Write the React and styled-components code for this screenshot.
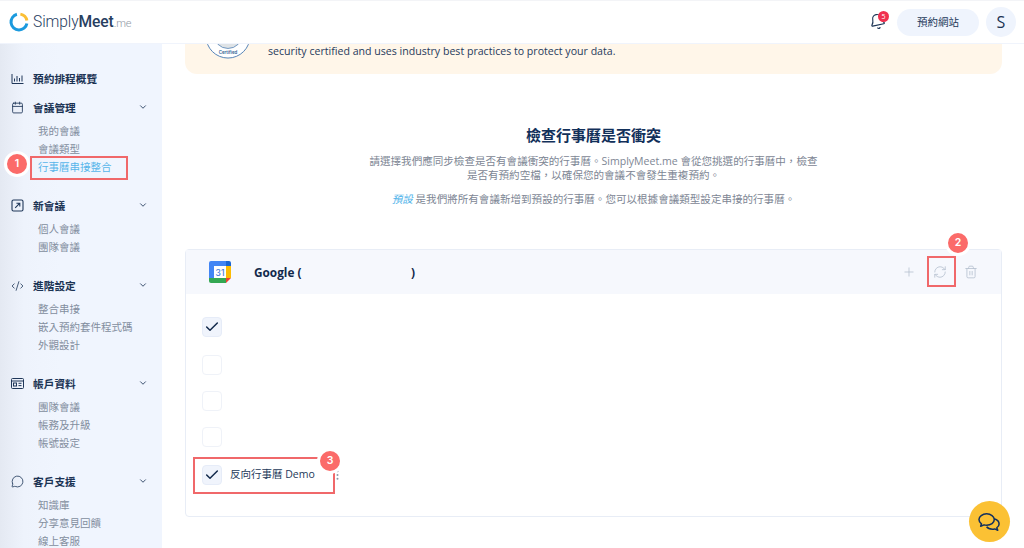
import React from "react";
import styled, { createGlobalStyle } from "styled-components";
import { Bell, Calendar, Check, ChevronDown, CodeXml, MessageCircle, Plus, RefreshCw, Trash2 } from "lucide-react";

const GlobalStyle = createGlobalStyle`
  html, body { margin: 0; padding: 0; height: 100%; background: #fff; }
  body { font-family: "Open Sans", "Noto Sans CJK TC", sans-serif; color: #1b3354; }
  * { box-sizing: border-box; }
`;

const Page = styled.div`
  width: 1024px;
  height: 548px;
  overflow: hidden;
  position: relative;
  display: flex;
  flex-direction: column;
`;

const Header = styled.header`
  height: 44px;
  flex-shrink: 0;
  display: flex;
  align-items: center;
  justify-content: space-between;
  padding: 0 8px 0 9px;
  border-top: 1px solid #f3f4f7;
  border-bottom: 1px solid #f0f4fc;
  background: #fff;
  position: relative;
  z-index: 2;
`;

const Logo = styled.div`
  display: flex;
  align-items: center;
  gap: 4px;
  font-family: "Roboto", sans-serif;
  font-size: 15.6px;
  letter-spacing: -0.1px;
  color: #28405f;
`;

const LogoBold = styled.span`
  font-weight: 500;
`;

const LogoLight = styled.span`
  font-weight: 300;
`;

const LogoTld = styled.span`
  font-size: 11px;
  font-weight: 300;
  color: #8f98a4;
`;

const HeaderRight = styled.div`
  display: flex;
  align-items: center;
`;

const BellWrap = styled.div`
  position: relative;
  width: 18px;
  height: 18px;
  margin-right: 10px;
  color: #1b3354;
  svg {
    transform: rotate(-12deg);
  }
`;

const BellCount = styled.span`
  position: absolute;
  top: -2px;
  right: -2px;
  width: 11px;
  height: 11px;
  border-radius: 50%;
  background: #f0304f;
  color: #fff;
  font-size: 7px;
  line-height: 11px;
  text-align: center;
`;

const SiteButton = styled.div`
  width: 82px;
  height: 27px;
  border-radius: 14px;
  background: #eff4fd;
  font-size: 10.5px;
  line-height: 27px;
  text-align: center;
  color: #24395a;
  margin-right: 7px;
`;

const Avatar = styled.div`
  width: 30px;
  height: 30px;
  border-radius: 50%;
  background: #eff4fd;
  font-size: 16px;
  line-height: 30px;
  text-align: center;
  color: #1b3354;
`;

const Body = styled.div`
  flex: 1;
  min-height: 0;
  display: flex;
`;

const Sidebar = styled.nav`
  width: 162px;
  flex-shrink: 0;
  padding-top: 25px;
  overflow: hidden;
  background: linear-gradient(90deg, #e4e9f2 0, #eef3fc 24px, #f0f5fe 60px);
`;

const Group = styled.div`
  margin-bottom: ${(p) => p.$gap}px;
`;

const GroupTitle = styled.div`
  height: 18px;
  display: flex;
  align-items: center;
  padding: 0 14px 0 11px;
  font-size: 10.7px;
  font-weight: 700;
  color: #1b3354;
`;

const GroupIcon = styled.span`
  width: 13px;
  height: 13px;
  margin-right: 9px;
  display: flex;
  color: #1f3759;
`;

const GroupLabel = styled.span`
  flex: 1;
`;

const SubList = styled.div`
  margin-top: 6px;
`;

const SubItem = styled.div`
  height: 18px;
  padding-left: 38px;
  font-size: 10.5px;
  line-height: 18px;
  white-space: nowrap;
  color: ${(p) => (p.$active ? "#57b5ea" : "#838e9e")};
  position: relative;
`;

const MarkBox = styled.span`
  position: absolute;
  border: 2px solid #f0686a;
  pointer-events: none;
`;

const SidebarMark = styled(MarkBox)`
  left: 30px;
  top: -2px;
  width: 98px;
  height: 24px;
`;

const StepBadge = styled.span`
  position: absolute;
  width: 26px;
  height: 26px;
  border-radius: 50%;
  border: 3px solid #fff;
  background: #fb6b69;
  color: #fff;
  font-family: "Inter", sans-serif;
  font-size: 10.5px;
  font-weight: 600;
  line-height: 20px;
  text-align: center;
  z-index: 1;
`;

const SidebarBadge = styled(StepBadge)`
  left: 4px;
  top: -7px;
`;

const Main = styled.main`
  flex: 1;
  min-width: 0;
  padding: 0 22px 0 23px;
  background: #fff;
`;

const Banner = styled.div`
  height: 30px;
  overflow: hidden;
  display: flex;
  align-items: flex-end;
  gap: 17px;
  padding: 0 0 15px 20px;
  background: #fff6e9;
  border-radius: 0 0 12px 12px;
  font-size: 10.6px;
  line-height: 16px;
  color: #1f3a5c;
`;

const Seal = styled.svg`
  flex-shrink: 0;
  margin-top: -40px;
`;

const Intro = styled.section`
  margin-top: 51px;
  text-align: center;
`;

const Title = styled.h2`
  margin: 0;
  font-size: 15px;
  font-weight: 700;
  line-height: 20px;
  color: #12305a;
`;

const Desc = styled.p`
  margin: ${(p) => p.$top}px 0 0;
  font-size: 10.55px;
  line-height: 13.5px;
  color: #7d8694;
`;

const DefaultTag = styled.em`
  color: #4fb3ea;
  font-style: italic;
`;

const Card = styled.section`
  margin-top: 42px;
  height: 268px;
  border: 1px solid #e8edf6;
  border-radius: 4px;
`;

const CardHeader = styled.div`
  height: 44px;
  display: flex;
  align-items: center;
  padding: 0 23px;
  background: #f6f8fd;
  position: relative;
`;

const AccountName = styled.div`
  width: 161px;
  margin-left: 23px;
  display: flex;
  justify-content: space-between;
  font-size: 11.8px;
  font-weight: 700;
  color: #12294b;
`;

const Actions = styled.div`
  margin-left: auto;
  display: flex;
  align-items: center;
  gap: 17px;
  color: #b6c0cf;
`;

const SyncMark = styled(MarkBox)`
  left: 741px;
  top: 6px;
  width: 29px;
  height: 31px;
`;

const SyncBadge = styled(StepBadge)`
  left: 759px;
  top: -20px;
`;

const CalendarList = styled.div`
  padding: 23px 16px 0;
`;

const CalendarRow = styled.div`
  height: 20px;
  margin-bottom: ${(p) => p.$gap}px;
  display: flex;
  align-items: center;
  gap: 8px;
  position: relative;
  font-size: 10.5px;
  color: #24395a;
`;

const RowLabel = styled.span`
  margin-top: -2px;
`;

const CheckBox = styled.span`
  width: 20px;
  height: 20px;
  flex-shrink: 0;
  display: flex;
  align-items: center;
  justify-content: center;
  border-radius: 4px;
  border: 1px solid ${(p) => (p.$checked ? "#e6ecf8" : "#eff2f8")};
  background: ${(p) => (p.$checked ? "#f0f4fc" : "#fff")};
  color: #12294b;
`;

const RowMark = styled(MarkBox)`
  left: -9px;
  top: -8px;
  width: 142px;
  height: 37px;
`;

const RowBadge = styled(StepBadge)`
  left: 115px;
  top: -17px;
`;

const RowMenu = styled.svg`
  position: absolute;
  left: 134px;
  top: 5px;
`;

const ChatButton = styled.div`
  position: absolute;
  right: 14px;
  bottom: 6px;
  width: 41px;
  height: 41px;
  border-radius: 50%;
  background: #fbc134;
  color: #12305e;
  display: flex;
  align-items: center;
  justify-content: center;
  z-index: 3;
`;

const LogoMark = () => (
  <svg width="20" height="20" viewBox="0 0 20 20" fill="none" strokeWidth="3">
    <path d="M17.88 11.39A8 8 0 1 1 7.93 2.27" stroke="#1b9ade" />
    <path d="M11.39 2.12A8 8 0 0 1 17.88 8.61" stroke="#fbbf35" />
  </svg>
);

const ChartIcon = () => (
  <svg width="13" height="13" viewBox="0 0 13 13" fill="none" stroke="currentColor" strokeWidth="1">
    <path d="M1 2v9.5h11.5M3.5 9.5V6.5M6 9.5V4M8.5 9.5V6M11 9.5V3.5" />
  </svg>
);

const LinkBoxIcon = () => (
  <svg width="13" height="13" viewBox="0 0 13 13" fill="none" stroke="currentColor" strokeWidth="1.1">
    <rect x="1" y="1" width="11" height="11" rx="1.5" />
    <path d="M4.2 8.8L8.8 4.2M5.4 4.2h3.4v3.4" />
  </svg>
);

const IdCardIcon = () => (
  <svg width="13" height="13" viewBox="0 0 13 13" fill="none" stroke="currentColor" strokeWidth="1">
    <rect x="0.5" y="1.5" width="12" height="10" rx="1" />
    <path d="M0.5 4h12M7.5 6.3h3M7.5 8.6h3" />
    <rect x="2.5" y="6" width="3" height="3" />
  </svg>
);

const ChatBubbles = () => (
  <svg width="23" height="20" viewBox="0 0 24 20" fill="none" stroke="currentColor" strokeWidth="1.6" strokeLinejoin="round">
    <path d="M9 1.5C4.6 1.5 1 4.2 1 7.5c0 1.8 1 3.3 2.6 4.4l-.8 2.6 3.5-1.5c.9.3 1.7.4 2.7.4 4.4 0 8-2.6 8-5.9S13.4 1.5 9 1.5z" />
    <path d="M16.8 6.6c3 .9 5.2 2.9 5.2 5.4 0 1.6-1 3-2.4 4l1 2.6-3.2-1.4c-.8.2-1.6.3-2.4.3-2.6 0-4.8-.9-6-2.5" />
  </svg>
);

const GoogleCalendar = () => (
  <svg width="22" height="22" viewBox="0 0 22 22">
    <path d="M2 0h15v5H5v12H0V2a2 2 0 0 1 2-2z" fill="#4285f4" />
    <path d="M17 0h3a2 2 0 0 1 2 2v3h-5z" fill="#1a66d2" />
    <rect x="17" y="5" width="5" height="12" fill="#fbbc04" />
    <path d="M0 17h17v5H2a2 2 0 0 1-2-2z" fill="#34a853" />
    <path d="M17 17h5l-5 5z" fill="#ea4335" />
    <rect x="5" y="5" width="12" height="12" fill="#fff" />
    <text x="11" y="14.6" textAnchor="middle" fontFamily="Inter, sans-serif" fontSize="8.5" fontWeight="500" fill="#3f78d8">31</text>
  </svg>
);

const IsoSeal = () => (
  <Seal width="46" height="46" viewBox="0 0 48 48">
    <circle cx="24" cy="24" r="23" fill="#fff" stroke="#4f7fb5" strokeWidth="1" />
    <circle cx="24" cy="22" r="15" fill="#dfe3e6" stroke="#4f7fb5" strokeWidth="0.8" />
    <text x="24" y="26" textAnchor="middle" fontFamily="Inter, sans-serif" fontSize="7" fontWeight="700" fill="#2c5c92">27001</text>
    <text x="24" y="43" textAnchor="middle" fontFamily="Inter, sans-serif" fontSize="4.6" fontWeight="600" fill="#2c5c92">Certified</text>
  </Seal>
);

const NAV = [
  { icon: <ChartIcon />, label: "預約排程概覽", gap: 11 },
  { icon: <Calendar size={13} strokeWidth={1.6} />, label: "會議管理", chevron: true, items: ["我的會議", "會議類型", "行事曆串接整合"], gap: 20 },
  { icon: <LinkBoxIcon />, label: "新會議", chevron: true, items: ["個人會議", "團隊會議"], gap: 20 },
  { icon: <CodeXml size={14} strokeWidth={1.5} />, label: "進階設定", chevron: true, items: ["整合串接", "嵌入預約套件程式碼", "外觀設計"], gap: 20 },
  { icon: <IdCardIcon />, label: "帳戶資料", chevron: true, items: ["團隊會議", "帳務及升級", "帳號設定"], gap: 20 },
  { icon: <MessageCircle size={13} strokeWidth={1.5} />, label: "客戶支援", chevron: true, items: ["知識庫", "分享意見回饋", "線上客服"], gap: 0 },
];

const ROWS = [
  { checked: true, gap: 18 },
  { checked: false, gap: 16 },
  { checked: false, gap: 16 },
  { checked: false, gap: 18 },
];

const App = () => {
  return (
    <Page>
      <GlobalStyle />
      <Header>
        <Logo>
          <LogoMark />
          <span>
            <LogoLight>Simply</LogoLight>
            <LogoBold>Meet</LogoBold>
            <LogoTld>.me</LogoTld>
          </span>
        </Logo>
        <HeaderRight>
          <BellWrap>
            <Bell size={17} strokeWidth={1.6} />
            <BellCount>5</BellCount>
          </BellWrap>
          <SiteButton>預約網站</SiteButton>
          <Avatar>S</Avatar>
        </HeaderRight>
      </Header>
      <Body>
        <Sidebar>
          {NAV.map((group) => (
            <Group key={group.label} $gap={group.gap}>
              <GroupTitle>
                <GroupIcon>{group.icon}</GroupIcon>
                <GroupLabel>{group.label}</GroupLabel>
                {group.chevron && <ChevronDown size={10} strokeWidth={2} />}
              </GroupTitle>
              {group.items && (
                <SubList>
                  {group.items.map((item) => {
                    const active = item === "行事曆串接整合";
                    return (
                      <SubItem key={item} $active={active}>
                        {item}
                        {active && <SidebarMark />}
                        {active && <SidebarBadge>1</SidebarBadge>}
                      </SubItem>
                    );
                  })}
                </SubList>
              )}
            </Group>
          ))}
        </Sidebar>
        <Main>
          <Banner>
            <IsoSeal />
            <span>security certified and uses industry best practices to protect your data.</span>
          </Banner>
          <Intro>
            <Title>檢查行事曆是否衝突</Title>
            <Desc $top={10}>
              請選擇我們應同步檢查是否有會議衝突的行事曆。SimplyMeet.me 會從您挑選的行事曆中，檢查
              <br />
              是否有預約空檔，以確保您的會議不會發生重複預約。
            </Desc>
            <Desc $top={11}>
              <DefaultTag>預設</DefaultTag> 是我們將所有會議新增到預設的行事曆。您可以根據會議類型設定串接的行事曆。
            </Desc>
          </Intro>
          <Card>
            <CardHeader>
              <GoogleCalendar />
              <AccountName>
                <span>Google (</span>
                <span>)</span>
              </AccountName>
              <Actions>
                <Plus size={14} strokeWidth={1.4} />
                <RefreshCw size={14} strokeWidth={1.4} />
                <Trash2 size={14} strokeWidth={1.4} />
              </Actions>
              <SyncMark />
              <SyncBadge>2</SyncBadge>
            </CardHeader>
            <CalendarList>
              {ROWS.map((row, i) => (
                <CalendarRow key={i} $gap={row.gap}>
                  <CheckBox $checked={row.checked}>
                    {row.checked && <Check size={16} strokeWidth={2.2} />}
                  </CheckBox>
                </CalendarRow>
              ))}
              <CalendarRow $gap={0}>
                <CheckBox $checked>
                  <Check size={16} strokeWidth={2.2} />
                </CheckBox>
                <RowLabel>反向行事曆 Demo</RowLabel>
                <RowMark />
                <RowBadge>3</RowBadge>
                <RowMenu width="3" height="10" viewBox="0 0 3 10" fill="#8f98a6">
                  <circle cx="1.5" cy="1.2" r="1" />
                  <circle cx="1.5" cy="5" r="1" />
                  <circle cx="1.5" cy="8.8" r="1" />
                </RowMenu>
              </CalendarRow>
            </CalendarList>
          </Card>
        </Main>
      </Body>
      <ChatButton>
        <ChatBubbles />
      </ChatButton>
    </Page>
  );
};

export default App;
